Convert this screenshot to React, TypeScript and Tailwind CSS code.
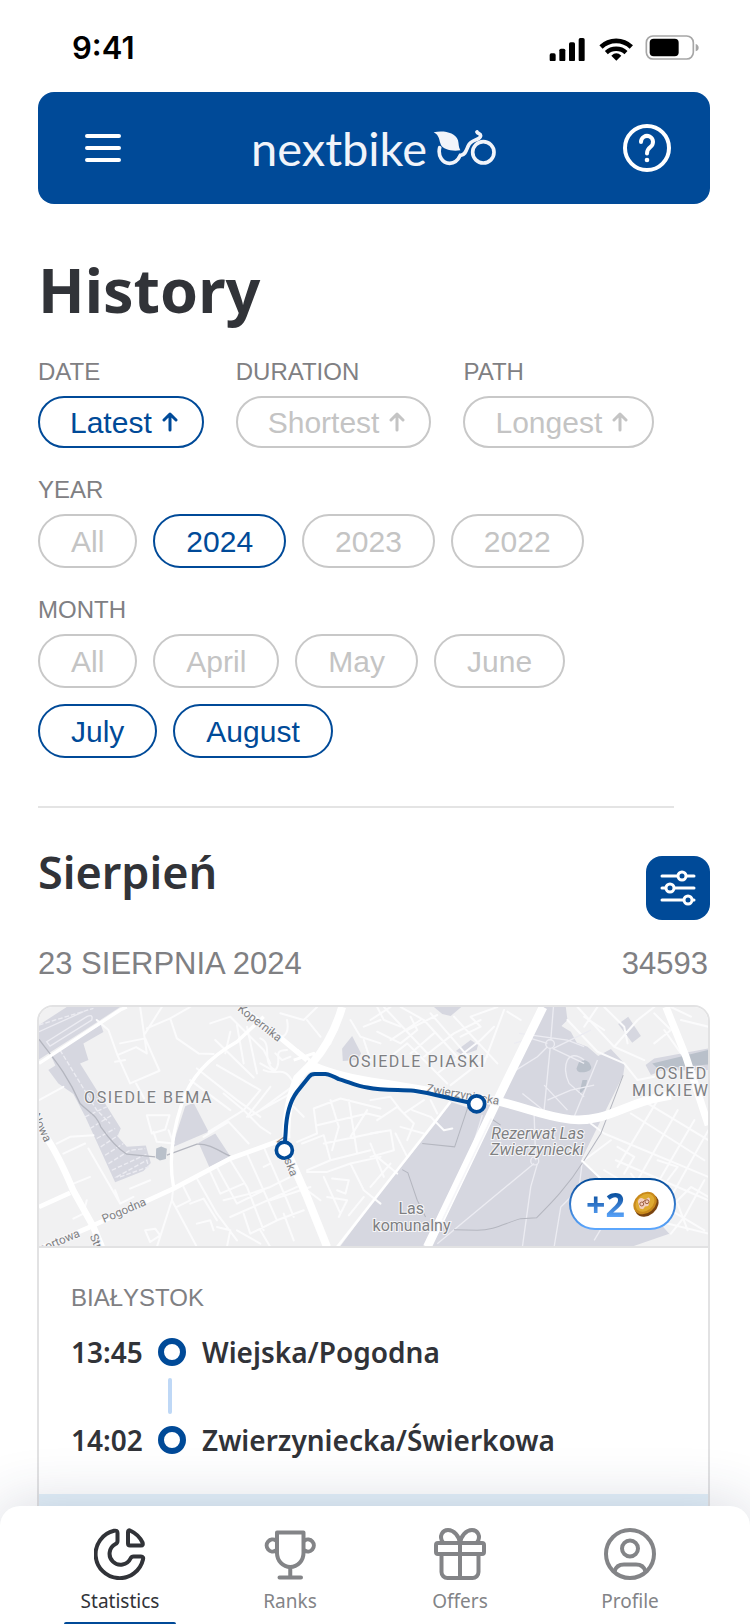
import { useState } from 'react';
import type { ReactNode } from 'react';

const YEARS = ['All', '2024', '2023', '2022'];
const MONTHS = ['All', 'April', 'May', 'June', 'July', 'August'];
const SORTS = [
  { label: 'Date', value: 'Latest' },
  { label: 'Duration', value: 'Shortest' },
  { label: 'Path', value: 'Longest' },
];

function StatusBar() {
  return (
    <div className="flex h-[92px] shrink-0 items-center justify-between pr-[51px] pl-[72px] pt-1">
      <span className="font-['Inter'] text-[31px] leading-8 font-semibold text-black">9:41</span>
      <svg className="h-[26px] w-[150px]" viewBox="40 31 450 78" aria-hidden="true">
        <rect x="42" y="86" width="18" height="24" rx="5" />
        <rect x="71" y="72" width="18" height="38" rx="5" />
        <rect x="100" y="53" width="18" height="57" rx="5" />
        <rect x="129" y="40" width="18" height="70" rx="5" />
        <g fill="none" stroke="#000" strokeWidth="14">
          <path d="M196 67A65 65 0 0 1 287 67" />
          <path d="M212 84A43 43 0 0 1 271 84" strokeWidth="13" />
        </g>
        <path d="M242 108l-15-15q15-14 30 0z" />
        <rect x="332" y="34" width="141" height="69" rx="20" fill="none" stroke="#a6a6a6" strokeWidth="5" />
        <rect x="342" y="42" width="87" height="53" rx="12" />
        <path d="M480 58q9 3 9 11t-9 11z" fill="#a6a6a6" />
      </svg>
    </div>
  );
}

function Header() {
  return (
    <header className="flex h-28 shrink-0 items-center justify-between rounded-2xl bg-[#004a98] pr-[39px] pl-[47px] text-white">
      <button type="button" aria-label="Menu">
        <svg className="h-7 w-9" viewBox="0 0 36 28" fill="none" stroke="currentColor" strokeWidth="4" strokeLinecap="round">
          <path d="M2 2h32M2 14h32M2 26h32" />
        </svg>
      </button>
      <a href="#home" className="ml-1 flex items-center gap-1.5 text-[#f1f4fa]">
        <span className="font-['Lato'] text-[47px] leading-[56px]">nextbike</span>
        <svg className="h-9 w-16" viewBox="608 61 192 108" fill="none" stroke="currentColor" strokeWidth="11" strokeLinecap="round">
          <path
            d="M610 68C640 62 674 68 683 92C686 104 684 112 690 122C662 126 638 118 632 106C626 94 628 76 610 68Z"
            fill="currentColor"
            stroke="none"
          />
          <path d="M628 114C622 138 636 161 658 161C676 161 684 150 690 137C704 138 708 122 714 108C722 90 745 92 750 81C754 71 743 74 740 67" />
          <circle cx="759" cy="128" r="32" />
        </svg>
      </a>
      <button type="button" aria-label="Help">
        <svg className="size-12" viewBox="0 0 48 48" fill="none" stroke="currentColor" strokeWidth="4" strokeLinecap="round">
          <circle cx="24" cy="24" r="22" />
          <path d="M18 18a6 6 0 1 1 9.5 4.8C25 24.6 24 26 24 29.500" />
          <circle cx="24" cy="36" r="2.300" fill="currentColor" stroke="none" />
        </svg>
      </button>
    </header>
  );
}

type ChipProps = {
  active: boolean;
  onClick: () => void;
  children: ReactNode;
};

function Chip({ active, onClick, children }: ChipProps) {
  return (
    <button
      type="button"
      aria-pressed={active}
      onClick={onClick}
      className={`flex h-[54px] items-center rounded-full border-2 px-[31px] text-[30px] ${
        active ? 'border-[#004a98] text-[#004a98]' : 'border-[#c8c8c8] text-[#c4c4c4]'
      }`}
    >
      {children}
    </button>
  );
}

function FilterLabel({ children }: { children: ReactNode }) {
  return <h3 className="mb-3 text-2xl leading-6 text-[#7f8083] uppercase">{children}</h3>;
}

function Filters() {
  const [sort, setSort] = useState('Latest');
  const [year, setYear] = useState('2024');
  const [months, setMonths] = useState(['July', 'August']);

  const toggleMonth = (m: string) =>
    setMonths(months.includes(m) ? months.filter((x) => x !== m) : [...months, m]);

  return (
    <section className="pt-[34px]">
      <div className="flex gap-8">
        {SORTS.map((s) => (
          <div key={s.value}>
            <FilterLabel>{s.label}</FilterLabel>
            <button
              type="button"
              aria-pressed={sort === s.value}
              onClick={() => setSort(s.value)}
              className={`flex h-[52px] items-center gap-2.5 rounded-full border-2 pr-6 pl-[30px] text-[30px] ${
                sort === s.value ? 'border-[#004a98] text-[#004a98]' : 'border-[#c8c8c8] text-[#c4c4c4]'
              }`}
            >
              {s.value}
              <svg className="h-5 w-4" viewBox="0 0 16 20" fill="none" stroke="currentColor" strokeWidth="3" strokeLinecap="round" strokeLinejoin="round">
                <path d="M8 18V2M2 8l6-6 6 6" />
              </svg>
            </button>
          </div>
        ))}
      </div>

      <div className="mt-[30px]">
        <FilterLabel>Year</FilterLabel>
        <div className="flex flex-wrap gap-4">
          {YEARS.map((y) => (
            <Chip key={y} active={y === year} onClick={() => setYear(y)}>
              {y}
            </Chip>
          ))}
        </div>
      </div>

      <div className="mt-[30px]">
        <FilterLabel>Month</FilterLabel>
        <div className="flex max-w-[560px] flex-wrap gap-4">
          {MONTHS.map((m) => (
            <Chip key={m} active={months.includes(m)} onClick={() => toggleMonth(m)}>
              {m}
            </Chip>
          ))}
        </div>
      </div>
    </section>
  );
}

function RouteMap() {
  return (
    <svg className="block aspect-[668/239] w-full" viewBox="27 21 2004 717" preserveAspectRatio="xMidYMid slice" role="img" aria-label="Trasa przejazdu">
      <rect x="27" y="21" width="2004" height="717" fill="#f1f1f2" />

      {/* parks, rail yard, forest */}
      <g fill="#d6d7e0">
        <path d="M27 75L110 21H270L165 90L27 178Z" />
        <path d="M62 165L212 74L220 96L160 130L175 180L150 190L272 385L262 408L290 440L347 436L362 488L340 512L255 546L165 348L130 282L85 250L55 210L76 196Z" />
        <path d="M465 318L490 308L535 395L425 442Z" />
        <path d="M505 428L555 400L600 468L537 500Z" />
        <path d="M935 145L965 108L992 160L980 180L937 183Z" />
        <g transform="translate(1020 0)">
          <path d="M-92 740L0 615L195 370L240 305L300 325L375 300L480 80L520 21H585L590 60L572 78L600 95L618 128L650 140L682 168L720 147L762 192L757 225L632 478L690 540L790 590L850 650L895 700L780 740Z" />
          <path d="M190 21H272L240 48L215 42Z" />
          <path d="M256 153L300 120L322 135L318 150L276 165Z" />
          <path d="M742 72L772 50L810 108L784 128Z" />
          <path d="M824 195L850 175L1012 145V210L870 212L840 225Z" />
        </g>
      </g>
      <g fill="#b9c0ca">
        <path d="M378 445l15-6 17 7-3 30-18 5-12-8z" />
        <path d="M1645 185q20-12 32 6t-10 24q-28 6-30-10z" />
        <path d="M1655 240h14q-4 32-24 42z" />
        <path d="M1864 190L2031 150V193L1990 197L1880 205Z" />
      </g>

      {/* small streets */}
      <g fill="none" stroke="#fbfbfc" strokeWidth="6" strokeLinejoin="round" strokeLinecap="round">
        <path d="M200 60L235 90L262 165L318 141L350 160L330 21M262 165L300 250L388 212L345 115L270 130M255 185L285 180M318 250L342 295M345 100L395 21M350 85L420 55L440 115M420 55L480 21M440 115L505 160L550 162M500 205L620 300L690 350M480 240L600 330" />
        <path d="M540 70L600 50L700 150L720 190M555 120L670 232M600 95L585 160M620 75L640 190M650 80L680 220M560 195L690 270L640 330M690 115C730 130 690 190 735 210C760 180 720 150 770 150M700 210C740 230 760 190 790 250M720 260L650 350M735 160l20 20l25-10M690 190l45 25" />
        <path d="M770 60C780 110 750 120 720 110M750 40L820 60L860 21M830 60L870 110" />
        <path d="M520 410L595 365L655 430M535 395L640 330L690 380L720 400M640 330L580 280M655 350L800 270M690 330L820 235" />
        <path d="M350 345L365 400L405 388L418 345L350 345M370 395L380 425L430 430L415 390" />
        <path d="M27 300L100 260M27 620L110 580M80 430L120 410L190 405M100 460L165 430M175 445L270 610M130 550L180 530M255 570L270 610L310 590M360 540L300 565M170 600L160 640L130 655" />
        <path d="M430 555L425 600L500 740M425 600L380 740M480 610L520 595L560 660M500 535L560 640L620 720M540 515L570 580L640 550M560 500L620 610L700 570M600 480L650 560L700 690M650 460L740 660M700 440L770 600L790 650M460 560L480 600L440 620M580 600L660 580L720 560L780 530M600 650L690 610L800 560M560 680L600 690L590 740M640 640L660 700L740 660L820 630M690 690L720 740M760 640L790 720M500 670L540 660L550 690M345 690L375 685L390 705L360 725ZM620 690L690 730M700 500L720 490M720 600L840 560" />
        <path d="M850 325L930 295L1050 325M850 325L860 400L800 425M860 375L1010 340L1050 350M815 430L880 405L900 480L830 510M880 430L1050 395M900 480L1020 450M830 515L890 515L960 490L1050 470M820 350L790 320M900 300L925 380L905 450M955 300L980 460M1010 330L960 410M880 530L930 640M960 490L1000 570L1050 610M905 535L955 540L945 580L920 570M890 590L950 600L925 650M955 645L1000 590M830 570L870 600" />
        <path d="M900 130L870 160M1000 80L1050 60M960 60L990 110L1050 130M1000 120L1020 180M1040 21L1060 60L1110 80" />
        <g transform="translate(1020 0)">
          <path d="M0 60L60 21M20 95L90 130L140 90L120 50M40 21L180 170M60 170L110 130L230 250M90 21L160 60L260 170M150 60L60 120M190 100L120 160M200 45L110 90M180 40L310 190M250 50L380 190M160 170L250 100L330 60M200 220L330 120L370 80M240 255L350 170M270 110L330 80L300 50L380 21M400 30L340 190M410 35L450 60" />
          <path d="M0 300L60 290L90 330M20 360L80 320L130 370L110 420M0 400L60 390L70 450L0 470M100 340L160 300M125 330L180 350L220 390L245 385M90 380L160 400M0 430L40 530M20 470L80 520M75 400L110 470M0 560L60 490M180 300L200 340" />
          <path d="M590 60L680 155L760 190M620 21L730 140L800 60L850 21M700 21L760 80L770 130M640 50L700 90M680 21L640 80M730 140L820 180M760 190L800 240L850 230M850 40L900 90L850 130M930 60L1012 80M900 21L960 50M880 90L930 160" />
          <path d="M660 370L700 400L1012 530M720 420L640 480M780 340L1000 480M830 310L1012 420M860 300L740 500M920 330L800 540M970 360L830 600M1012 390L900 590M735 480L1012 600M700 510L1000 690M780 520L850 610M740 440L790 470L760 520M860 480L920 500L890 540M900 620L960 560L1012 590M850 660L1012 700M920 610L950 690M1000 540L940 650L900 700" />
        </g>
      </g>

      {/* paths inside the forest and the rail yard */}
      <g fill="none" stroke="#ececf2" strokeWidth="4">
        <path d="M27 95L160 35M50 125L170 50Q190 40 185 60L60 138Z" />
        <path d="M27 75L190 25M90 150L200 330L240 370M165 350L230 320M180 385L245 345M200 415L255 385M212 440L265 405M225 465L280 430M235 490L300 450L345 445M245 510L350 462M260 530L350 480L355 500L270 530Z" strokeDasharray="14 6" />
        <g transform="translate(1020 0)">
          <path d="M548 21L540 120M538 145L520 330M548 145L660 90M430 130L480 115L530 130M445 100L590 120L640 140M420 220L500 170L530 140M545 145L640 190M640 180C590 140 570 200 595 250L640 290M520 255L590 330M530 300L600 270L670 255M455 280L530 340M680 180L610 350M500 490L480 560L455 740M490 490L200 730M490 340L495 480M635 480L625 560L600 590L570 620L550 740M765 560L670 720M335 345L290 490L240 580" />
          <circle cx="538" cy="132" r="13" />
          <circle cx="492" cy="482" r="12" />
        </g>
      </g>
      <g fill="none" stroke="#b4b6bf" strokeWidth="4">
        <path d="M27 118C70 175 110 220 150 310C180 340 200 345 212 380C240 420 270 450 290 462L375 470M410 465L500 432C540 430 570 455 600 468" />
        <g transform="translate(1020 0)">
          <path d="M757 225L690 400L640 480C590 560 540 610 498 652L450 655C400 670 370 690 320 690L250 688M155 430L252 440L292 320M95 508L112 518L140 600L165 650M365 358L390 375" strokeWidth="3" />
        </g>
      </g>

      {/* main roads */}
      <g fill="none" stroke="#fff" strokeLinejoin="round">
        <path d="M27 190L270 30L290 21" strokeWidth="10" />
        <path d="M27 382C60 420 100 500 130 572L190 680L215 740" strokeWidth="20" />
        <path d="M27 620L120 578M40 740L180 680L430 565L600 475L765 415" strokeWidth="14" />
        <path d="M430 560C415 480 425 400 455 310C480 230 540 170 620 125L700 50" strokeWidth="10" />
        <path d="M630 21L740 105L830 180" strokeWidth="16" />
        <path d="M935 21C915 90 880 150 845 190L800 235C780 290 765 340 768 415" strokeWidth="24" />
        <path d="M768 450L830 590L890 740" strokeWidth="24" />
        <path d="M800 150L870 205L820 215L880 150M790 180L850 160L860 215" strokeWidth="9" />
        <g transform="translate(1020 0)">
          <path d="M-190 190C-140 215 -80 232 0 245C120 262 220 285 375 302C460 320 520 350 600 358C700 368 760 315 850 295L900 285" strokeWidth="26" />
          <path d="M517 21L385 290L170 740" strokeWidth="26" />
          <path d="M362 355L215 660" strokeWidth="5" stroke="#f6f6f9" />
          <path d="M-100 740L240 305" strokeWidth="8" />
          <path d="M885 21L945 170L1012 375" strokeWidth="22" />
          <path d="M632 480L705 550" strokeWidth="6" />
        </g>
      </g>

      {/* place names */}
      <g fill="#7e7f82" stroke="#f6f6f8" strokeWidth="6" paintOrder="stroke" className="font-['Roboto']">
        <g fontSize="48" className="tracking-widest">
          <text x="162" y="308">OSIEDLE BEMA</text>
          <text x="954" y="200">OSIEDLE PIASKI</text>
          <text x="1873" y="238">OSIEDLE</text>
          <text x="1803" y="288">MICKIEWICZA</text>
        </g>
        <g fontSize="48">
          <text x="1382" y="416" fontStyle="italic">Rezerwat Las</text>
          <text x="1379" y="464" fontStyle="italic">Zwierzyniecki</text>
          <text x="1142" y="642" textAnchor="middle">Las</text>
          <text x="1143" y="692" textAnchor="middle">komunalny</text>
        </g>
        <g fontSize="35">
          <text transform="translate(620 30) rotate(38)">Kopernika</text>
          <text transform="translate(1186 276) rotate(10)">Zwierzyniecka</text>
          <text transform="translate(736 418) rotate(68)">Wiejska</text>
          <text transform="translate(222 668) rotate(-23)">Pogodna</text>
          <text transform="translate(14 766) rotate(-23)">Sportowa</text>
          <text transform="translate(178 708) rotate(65)">Stroma</text>
          <text transform="translate(6 346) rotate(65)">Nowa</text>
        </g>
      </g>

      <path
        d="M762 450L766 395C768 340 780 302 800 275L836 230Q843 221 856 222L885 222Q900 224 925 237C950 243 980 260 1010 262C1060 272 1110 268 1150 272C1210 280 1270 300 1338 311"
        fill="none"
        stroke="#004a98"
        strokeWidth="12"
      />
      <g fill="#fff" stroke="#004a98" strokeWidth="11">
        <circle cx="762" cy="450" r="24" />
        <circle cx="1338" cy="311" r="24" />
      </g>
    </svg>
  );
}

function Coin() {
  return (
    <svg className="size-[26px]" viewBox="310 94 80 76" aria-hidden="true">
      <ellipse cx="352" cy="136" rx="40" ry="31" transform="rotate(-40 352 136)" fill="#7a4410" />
      <ellipse cx="347" cy="129" rx="39" ry="31" transform="rotate(-40 347 129)" fill="#c98a1c" />
      <ellipse cx="347" cy="128" rx="32" ry="24" transform="rotate(-40 347 128)" fill="#deaa30" />
      <path d="M325 125q3-14 14-11l8 5 10-7q8 2 4 12l-4 14-10 2-6 8-10-2z" fill="#f3cfc0" />
      <g fill="none" stroke="#9a5a3c" strokeWidth="3">
        <circle cx="337" cy="132" r="6" />
        <circle cx="353" cy="125" r="6" />
        <path d="M340 126l8-6" />
      </g>
    </svg>
  );
}

function Stop({ time, name }: { time: string; name: string }) {
  return (
    <div className="flex h-7 items-center text-[28px] font-semibold text-[#313338]">
      <time className="w-[87px] shrink-0">{time}</time>
      <span className="mr-4 size-7 shrink-0 rounded-full border-6 border-[#004a98]" />
      <span className="whitespace-nowrap">{name}</span>
    </div>
  );
}

function TripCard() {
  return (
    <article className="mt-[25px] -ml-px overflow-hidden rounded-2xl border-2 border-[#e2e2e3]">
      <div className="relative border-b-2 border-[#e2e2e3]">
        <RouteMap />
        <div className="absolute right-8 bottom-4 rounded-full bg-linear-to-b from-[#004a98] to-[#5da8ff] p-0.5">
          <div className="flex h-12 items-center gap-2 rounded-full bg-white px-[15px]">
            <span className="bg-linear-to-b from-[#004a98] from-25% to-[#5da8ff] to-80% bg-clip-text font-['Noto_Sans'] text-[34px] leading-[48px] font-bold text-transparent">
              +2
            </span>
            <Coin />
          </div>
        </div>
      </div>
      <div className="px-8 pt-[38px] pb-10 font-['Noto_Sans']">
        <p className="mb-7 font-['Liberation_Sans'] text-2xl leading-6 text-[#7f8083]">BIAŁYSTOK</p>
        <Stop time="13:45" name="Wiejska/Pogodna" />
        <div className="my-3 ml-[97px] h-9 w-1 rounded-full bg-[#bfd8f6]" />
        <Stop time="14:02" name="Zwierzyniecka/Świerkowa" />
      </div>
      <div className="h-24 bg-[#e4f1fa]" />
    </article>
  );
}

const TABS = [
  {
    name: 'Statistics',
    icon: (
      <>
        <path d="M34 4Q34 1.500 36.500 2.800A25 25 0 0 1 48.500 14.500Q49.500 17.500 47 17.500H36Q34 17.500 34 15.500Z" />
        <path d="M20 2.800Q23.500 2 23.500 5V13Q23.500 15 21.500 16A11 11 0 1 0 36.500 30.500Q37.500 28.500 39.500 28.500H47Q49.800 28.500 49 31.500A24 24 0 1 1 20 2.800Z" />
      </>
    ),
  },
  {
    name: 'Ranks',
    icon: (
      <>
        <path d="M13 4.500H39.500V25A13.250 14 0 0 1 13 25Z" />
        <path d="M12 12.500A6 6 0 1 0 12 22.500M40.500 12.500A6 6 0 1 1 40.500 22.500M26.250 39V49.500M15.500 49.500H37" />
      </>
    ),
  },
  {
    name: 'Offers',
    icon: (
      <>
        <rect x="2" y="15" width="48" height="11" rx="2" />
        <path d="M7.500 26V44a6 6 0 0 0 6 6h25a6 6 0 0 0 6-6V26M26 15V50" />
        <path d="M9 14.500C4.500 8 8.500 2 14 2C20 2 25 8 26 15C27 8 32 2 38 2C43.500 2 47.500 8 43 14.500" />
      </>
    ),
  },
  {
    name: 'Profile',
    icon: (
      <>
        <circle cx="26" cy="26" r="24" />
        <circle cx="26" cy="20.500" r="8" />
        <path d="M10.500 43.500C12 38 16 36.500 20 36.500H32C36 36.500 40 38 41.500 43.500" />
      </>
    ),
  },
];

function TabBar() {
  return (
    <nav className="relative z-10 -mt-5 flex shrink-0 rounded-t-[20px] bg-white px-[35px] pt-[22px] shadow-[0_0_60px_rgba(40,50,90,0.2)]">
      {TABS.map((tab) => {
        const current = tab.name === 'Statistics';
        return (
          <a
            key={tab.name}
            href={`#${tab.name.toLowerCase()}`}
            aria-current={current ? 'page' : undefined}
            className={`flex flex-1 flex-col items-center font-['Noto_Sans'] text-[19px] leading-6 ${
              current ? 'text-[#313338]' : 'text-[#838487]'
            }`}
          >
            <svg className="mb-[9px] size-[52px]" viewBox="0 0 52 52" fill="none" stroke="currentColor" strokeWidth="4" strokeLinecap="round" strokeLinejoin="round">
              {tab.icon}
            </svg>
            {tab.name}
            <span className={`mt-[9px] h-0.5 w-28 rounded-t-sm ${current ? 'bg-[#004a98]' : 'bg-transparent'}`} />
          </a>
        );
      })}
    </nav>
  );
}

export default function App() {
  return (
    <div className="flex h-screen flex-col bg-white font-['Liberation_Sans',sans-serif]">
      <div className="min-h-0 flex-1 overflow-y-auto [scrollbar-width:none]">
        <StatusBar />
        <div className="pr-10 pl-[38px]">
          <Header />
          <h1 className="mt-[50px] font-['Noto_Sans'] text-[61px] leading-[72px] font-bold text-[#313338]">History</h1>
          <Filters />
          <hr className="mt-12 mr-9 border-t-2 border-[#e4e4e4]" />
          <div className="mt-9 flex items-end justify-between">
            <h2 className="self-start font-['Noto_Sans'] text-[45px] leading-[56px] font-semibold text-[#313338]">Sierpień</h2>
            <button type="button" aria-label="Filters" className="mt-3 flex size-16 items-center justify-center rounded-2xl bg-[#004a98]">
              <svg className="h-9 w-9" viewBox="0 0 36 36" fill="#004a98" stroke="#fff" strokeWidth="3" strokeLinecap="round">
                <path d="M2 6h32M2 18h32M2 30h32" />
                <circle cx="22" cy="6" r="4" />
                <circle cx="10" cy="18" r="4" />
                <circle cx="28" cy="30" r="4" />
              </svg>
            </button>
          </div>
          <div className="mt-7 flex justify-between pr-0.5 text-[31px] leading-8 text-[#7f8083]">
            <span>23 SIERPNIA 2024</span>
            <span>34593</span>
          </div>
          <TripCard />
        </div>
      </div>
      <TabBar />
    </div>
  );
}
